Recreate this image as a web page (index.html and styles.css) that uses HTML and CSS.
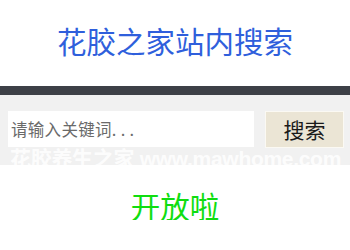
FILE: index.html
```html
<!DOCTYPE html>
<html lang="zh-CN">
<head>
    <meta charset="UTF-8">
    <meta name="viewport" content="width=device-width, initial-scale=1.0">
    <title>花胶之家站内搜索</title>
    <link rel="stylesheet" href="styles.css">
</head>
<body>
    <div class="header">
        <h1 class="title">花胶之家站内搜索</h1>
    </div>
    <div class="bar"></div>

    <form class="search" onsubmit="return false;">
        <input class="search-input" type="text" placeholder="请输入关键词. . .">
        <button class="search-btn" type="submit">搜索</button>
        <span class="watermark">花胶养生之家 www.mawhome.com</span>
    </form>

    <p class="status">开放啦</p>
</body>
</html>
```

FILE: styles.css
```css
body {
    margin: 0;
    background: #ffffff;
    font-family: "Noto Sans CJK SC", "Liberation Sans", sans-serif;
}

.header {
    height: 86px;
    padding-top: 25px;
    box-sizing: border-box;
}

.title {
    margin: 0;
    text-align: center;
    font-size: 29.5px;
    line-height: 30px;
    font-weight: normal;
    color: #2f5fdc;
}

.bar {
    height: 9px;
    background-color: #3d4047;
}

.search {
    position: relative;
    display: flex;
    align-items: center;
    height: 70px;
    padding: 0 6px 2px 8px;
    background-color: #f1f1f1;
    box-sizing: border-box;
}

.search-input {
    width: 246px;
    height: 36px;
    padding: 0 3px;
    border: none;
    background: #ffffff;
    font-family: "Noto Sans CJK SC", sans-serif;
    font-size: 16.5px;
    box-sizing: border-box;
    outline: none;
}

.search-input::placeholder {
    color: #6a6a6a;
    letter-spacing: 0.3px;
}

.search-btn {
    margin-left: auto;
    width: 79px;
    height: 37px;
    border: 1px solid #fbf9f3;
    background-color: #ebe5d5;
    color: #1a1a1a;
    font-family: "Noto Sans CJK SC", sans-serif;
    font-size: 21px;
    padding: 0;
}

.watermark {
    position: absolute;
    left: 10px;
    top: 52px;
    font-family: "Liberation Sans", "Noto Sans CJK SC", sans-serif;
    font-weight: bold;
    font-size: 21px;
    line-height: 24px;
    color: rgba(255, 255, 255, 0.85);
    white-space: nowrap;
    letter-spacing: -0.3px;
}

.status {
    margin: 25px 0 0;
    text-align: center;
    font-size: 29.5px;
    line-height: 30px;
    color: #10dd10;
}
```
